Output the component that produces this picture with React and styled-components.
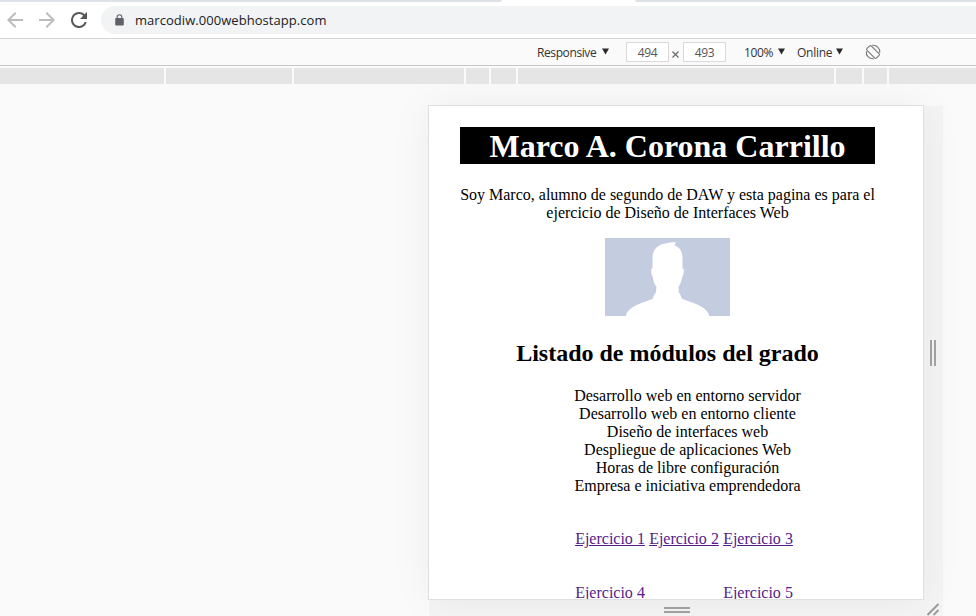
import React from "react";
import styled, { createGlobalStyle } from "styled-components";

const GlobalStyle = createGlobalStyle`
  * { box-sizing: border-box; }
  body { margin: 0; background: #fafafa; }
`;

const Window = styled.div`
  width: 976px;
  height: 616px;
  display: flex;
  flex-direction: column;
  overflow: hidden;
  background: #fafafa;
  font-family: "Open Sans", "Noto Sans", sans-serif;
`;

/* Browser chrome */
const TabStrip = styled.div`
  flex: none;
  height: 2px;
  display: flex;
  justify-content: space-between;
  background: #fff;
`;
const InactiveTabs = styled.div`
  width: ${(p) => p.$width}px;
  background: #dee1e6;
  border-radius: ${(p) => (p.$end ? "0 0 0 3px" : "0 0 3px 0")};
`;
const NavBar = styled.div`
  flex: none;
  height: 36px;
  display: flex;
  align-items: center;
  padding: 4px 0 4px 6px;
  background: #fff;
`;
const NavButtons = styled.div`
  display: flex;
  width: 95px;
  gap: 14px;
`;
const NavIcon = styled.svg`
  display: block;
  flex: none;
  width: 18px;
  height: 18px;
  fill: ${(p) => (p.$active ? "#54575b" : "#babcbe")};
`;
const AddressBar = styled.div`
  flex: 1;
  height: 28px;
  display: flex;
  align-items: center;
  gap: 10px;
  padding-left: 13px;
  border-radius: 14px 0 0 14px;
  background: #f1f3f4;
`;
const LockIcon = styled.svg`
  display: block;
  width: 11px;
  height: 12px;
  margin-top: -1px;
`;
const Url = styled.span`
  color: #202124;
  font-size: 13px;
  line-height: 20px;
  letter-spacing: 0.05px;
  white-space: nowrap;
`;

/* Device toolbar */
const DeviceToolbar = styled.div`
  flex: none;
  height: 28px;
  display: flex;
  align-items: center;
  padding-left: 537px;
  border-top: 1px solid #d5d5d5;
  border-bottom: 1px solid #c8c8c8;
  background: #fafafa;
  color: #333;
`;
const Dropdown = styled.div`
  flex: none;
  width: ${(p) => p.$width}px;
  display: flex;
  align-items: center;
  justify-content: space-between;
  margin-left: ${(p) => p.$before || 0}px;
  padding-top: 2px;
  font-size: 12px;
  line-height: 16px;
  letter-spacing: ${(p) => p.$tracking || -0.4}px;
  white-space: nowrap;
`;
const Caret = styled.svg`
  display: block;
  width: 7px;
  height: 7px;
  margin-top: -3px;
  fill: #2b2b2b;
`;
const SizeField = styled.div`
  flex: none;
  width: 43px;
  height: 20px;
  border: 1px solid #dadada;
  background: #fff;
  color: #555;
  font-size: 12px;
  line-height: 20px;
  letter-spacing: -0.3px;
  text-align: center;
  margin-left: ${(p) => p.$before}px;
`;
const Times = styled.svg`
  display: block;
  width: 7px;
  height: 7px;
  margin: 5px 0 0 3px;
  stroke: #6b6b6b;
  stroke-width: 1.2;
`;
const RotateIcon = styled.svg`
  display: block;
  width: 16px;
  height: 16px;
  margin-left: 22px;
  fill: none;
  stroke: #777;
  stroke-width: 1.1;
`;

/* Breakpoint ruler */
const Ruler = styled.div`
  flex: none;
  height: 18px;
  display: flex;
  gap: 2px;
  padding: 2px 0 0;
  background: #fafafa;
`;
const Segment = styled.div`
  flex: ${(p) => (p.$width ? "none" : "1")};
  width: ${(p) => p.$width}px;
  background: #e5e5e5;
`;

/* Emulated device */
const Stage = styled.div`
  flex: 1;
  min-height: 0;
  display: grid;
  grid-template-columns: 496px 19px;
  grid-template-rows: 495px 16px;
  padding: 21px 0 0 428px;
  overflow: hidden;
`;
const Screen = styled.div`
  position: relative;
  overflow: hidden;
  border: 1px solid #dfdfdf;
  background: #fff;
`;
const ScreenShadow = styled.div`
  display: grid;
  box-shadow: 0 0 40px rgba(0, 0, 0, 0.055);
  position: relative;
  z-index: 1;
`;
const ResizeHandle = styled.div`
  display: flex;
  align-items: center;
  justify-content: center;
  gap: 2px;
  flex-direction: ${(p) => (p.$bottom ? "column" : "row")};
  margin: ${(p) => (p.$bottom ? "0 0 0 1px" : "1px 0 0")};
  padding: ${(p) => (p.$bottom ? "4px 0 0" : "0 1px 0 0")};
  background: #f4f4f4;
`;
const Grip = styled.div`
  width: ${(p) => (p.$wide ? 26 : 2)}px;
  height: ${(p) => (p.$wide ? 2 : 26)}px;
  background: #a0a0a0;
  position: relative;
  z-index: 2;
`;
const Corner = styled.div`
  display: flex;
  background: #f4f4f4;
`;
const CornerIcon = styled.svg`
  display: block;
  width: 13px;
  height: 13px;
  margin: 3px 0 0 3px;
  stroke: #9a9a9a;
  stroke-width: 2;
  position: relative;
  z-index: 2;
`;

/* Page shown in the device */
const Page = styled.main`
  width: 477px;
  height: 600px;
  padding: 21px 31px 0;
  color: #000;
  font-family: "Liberation Serif", "Times New Roman", serif;
  font-size: 16px;
  line-height: 18px;
  text-align: center;
`;
const Title = styled.h1`
  height: 37px;
  margin: 0 0 22px;
  background: #000;
  color: #fff;
  font-size: 32px;
  line-height: 38px;
`;
const Intro = styled.p`
  margin: 0 -2px 16px;
`;
const Portrait = styled.svg`
  display: block;
  width: 125px;
  height: 78px;
  margin: 0 auto 24px;
`;
const Subtitle = styled.h2`
  margin: 0 0 20px;
  font-size: 24px;
  line-height: 27px;
`;
const Modules = styled.ul`
  margin: 0 0 35px;
  padding: 0 0 0 40px;
  list-style: none;
`;
const Exercises = styled.nav`
  display: grid;
  grid-template-columns: repeat(3, 70px);
  gap: 36px 4px;
  justify-content: start;
  padding-left: 115px;
`;
const Exercise = styled.a`
  grid-column: ${(p) => p.$column};
  color: #551a8b;
  text-decoration: underline;
  white-space: nowrap;
`;

const modules = [
  "Desarrollo web en entorno servidor",
  "Desarrollo web en entorno cliente",
  "Diseño de interfaces web",
  "Despliegue de aplicaciones Web",
  "Horas de libre configuración",
  "Empresa e iniciativa emprendedora",
];
const segments = [164, 126, 170, 23, 25, 316, 26, 23];
const exercises = [
  [1, 1],
  [2, 2],
  [3, 3],
  [4, 1],
  [5, 3],
];

const DownCaret = () => (
  <Caret viewBox="0 0 7 7">
    <path d="M0 0.5h7L3.5 6.5z" />
  </Caret>
);

export default function App() {
  return (
    <Window>
      <GlobalStyle />
      <TabStrip>
        <InactiveTabs $width={502} />
        <InactiveTabs $width={341} $end />
      </TabStrip>
      <NavBar>
        <NavButtons>
          <NavIcon viewBox="3 3 18 18">
            <path d="M20 11H7.83l5.59-5.59L12 4l-8 8 8 8 1.41-1.41L7.83 13H20z" />
          </NavIcon>
          <NavIcon viewBox="3 3 18 18">
            <path d="M12 4l-1.41 1.41L16.17 11H4v2h12.17l-5.58 5.59L12 20l8-8z" />
          </NavIcon>
          <NavIcon viewBox="3 3 18 18" $active>
            <path d="M17.65 6.35A7.96 7.96 0 0 0 12 4a8 8 0 1 0 7.73 10h-2.08A6 6 0 1 1 12 6c1.66 0 3.14.69 4.22 1.78L13 11h7V4z" />
          </NavIcon>
        </NavButtons>
        <AddressBar>
          <LockIcon viewBox="0 0 11 12">
            <rect x="1.2" y="4" width="8.6" height="7.4" rx="1" fill="#5f6368" />
            <path d="M3.2 4.5V3a2.3 2.3 0 0 1 4.6 0v1.5" fill="none" stroke="#5f6368" strokeWidth="1.1" />
          </LockIcon>
          <Url>marcodiw.000webhostapp.com</Url>
        </AddressBar>
      </NavBar>
      <DeviceToolbar>
        <Dropdown $width={72}>
          Responsive
          <DownCaret />
        </Dropdown>
        <SizeField $before={17}>494</SizeField>
        <Times viewBox="0 0 7 7">
          <path d="M0.5 0.5l6 6M6.5 0.5l-6 6" />
        </Times>
        <SizeField $before={4}>493</SizeField>
        <Dropdown $width={41} $before={18}>
          100%
          <DownCaret />
        </Dropdown>
        <Dropdown $width={46} $before={12} $tracking={-0.25}>
          Online
          <DownCaret />
        </Dropdown>
        <RotateIcon viewBox="0 0 16 16">
          <rect x="4.9" y="1.3" width="6.2" height="13.4" rx="1.4" transform="rotate(-45 8 8)" />
          <path d="M7.2 1.3a6.7 6.7 0 0 1 7.5 7.5M8.800 14.700A6.700 6.700 0 0 1 1.300 7.200" />
        </RotateIcon>
      </DeviceToolbar>
      <Ruler>
        {segments.map((width, i) => (
          <Segment key={i} $width={width} />
        ))}
        <Segment />
      </Ruler>
      <Stage>
        <ScreenShadow>
          <Screen>
            <Page>
              <Title>Marco A. Corona Carrillo</Title>
              <Intro>
                Soy Marco, alumno de segundo de DAW y esta pagina es para el
                <br />
                ejercicio de Diseño de Interfaces Web
              </Intro>
              <Portrait viewBox="0 0 125 78">
                <rect width="125" height="78" fill="#c4cce0" />
                <path
                  fill="#fff"
                  d="M21 78C21 73 28 68.500 34 66C39 64 44 62.500 48 60.500C48.500 58 49 56 51 54.500L51.500 48.500C49.500 47 48.300 43 47.800 39C46.500 37 46 34.500 46.300 31C46.500 30.400 47 30.200 47.500 30.300V20C47.500 11 53 7.500 58 6C62 4.800 66 4.300 71 4.300L70 6.300L69.300 7.200C75 9 77.500 14 77.500 20V30.500C78.500 30.600 79 31 78.800 33C78.600 36 78 38 77 39.500C76.500 43 75.500 46 73.700 48.500V54.500C75.500 56 76 58 76.700 60.500C81 62.500 86 64 91 66C97 68.500 104 73 104 78Z"
                />
              </Portrait>
              <Subtitle>Listado de módulos del grado</Subtitle>
              <Modules>
                {modules.map((name) => (
                  <li key={name}>{name}</li>
                ))}
              </Modules>
              <Exercises>
                {exercises.map(([number, column]) => (
                  <Exercise key={number} $column={column} href={`#ejercicio-${number}`}>
                    Ejercicio {number}
                  </Exercise>
                ))}
              </Exercises>
            </Page>
          </Screen>
        </ScreenShadow>
        <ResizeHandle>
          <Grip />
          <Grip />
        </ResizeHandle>
        <ResizeHandle $bottom>
          <Grip $wide />
          <Grip $wide />
        </ResizeHandle>
        <Corner>
          <CornerIcon viewBox="0 0 13 13">
            <path d="M0.500 12L11.500 1M6.500 12l5-5" />
          </CornerIcon>
        </Corner>
      </Stage>
    </Window>
  );
}
